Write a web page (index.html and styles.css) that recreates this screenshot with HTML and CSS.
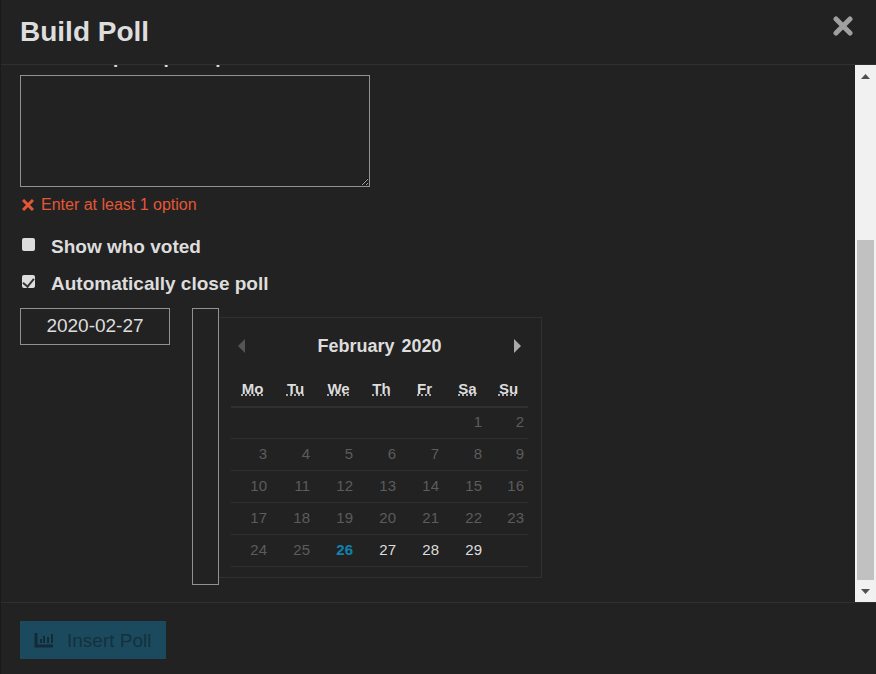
FILE: index.html
```html
<!DOCTYPE html>
<html lang="en">
<head>
    <meta charset="UTF-8">
    <meta name="viewport" content="width=device-width, initial-scale=1.0">
    <title>Build Poll</title>
    <link rel="stylesheet" href="styles.css">
</head>
<body>
    <div class="modal">
        <header class="modal-header">
            <h1>Build Poll</h1>
            <button class="close" aria-label="close">
                <svg width="20" height="20" viewBox="0 0 20 20"><path d="M3 3 L17 17 M17 3 L3 17"/></svg>
            </button>
        </header>
        <div class="modal-middle">
            <form class="modal-body" id="poll-form">
                <label class="options-label" for="options">Enter one poll option per line</label>
                <textarea class="options" id="options"></textarea>
                <p class="tip">
                    <svg width="12" height="12" viewBox="0 0 12 12"><path d="M1 1 L11 11 M11 1 L1 11"/></svg>
                    Enter at least 1 option
                </p>
                <label class="check"><input type="checkbox">Show who voted</label>
                <label class="check"><input type="checkbox" checked>Automatically close poll</label>
                <div class="date-row">
                    <input class="date" type="text" value="2020-02-27" aria-label="Close date">
                    <input class="time" type="text" aria-label="Close time">
                    <div class="calendar">
                        <div class="calendar-title">
                            <button type="button" class="prev" aria-label="Previous month" disabled></button>
                            <div class="month"><span>February</span><span>2020</span></div>
                            <button type="button" class="next" aria-label="Next month"></button>
                        </div>
                        <table>
                            <thead>
                                <tr>
                                    <th><abbr title="Monday">Mo</abbr></th>
                                    <th><abbr title="Tuesday">Tu</abbr></th>
                                    <th><abbr title="Wednesday">We</abbr></th>
                                    <th><abbr title="Thursday">Th</abbr></th>
                                    <th><abbr title="Friday">Fr</abbr></th>
                                    <th><abbr title="Saturday">Sa</abbr></th>
                                    <th><abbr title="Sunday">Su</abbr></th>
                                </tr>
                            </thead>
                            <tbody>
                                <tr><td></td><td></td><td></td><td></td><td></td><td>1</td><td>2</td></tr>
                                <tr><td>3</td><td>4</td><td>5</td><td>6</td><td>7</td><td>8</td><td>9</td></tr>
                                <tr><td>10</td><td>11</td><td>12</td><td>13</td><td>14</td><td>15</td><td>16</td></tr>
                                <tr><td>17</td><td>18</td><td>19</td><td>20</td><td>21</td><td>22</td><td>23</td></tr>
                                <tr>
                                    <td>24</td>
                                    <td>25</td>
                                    <td class="today">26</td>
                                    <td><button type="button" class="day">27</button></td>
                                    <td><button type="button" class="day">28</button></td>
                                    <td><button type="button" class="day">29</button></td>
                                    <td></td>
                                </tr>
                            </tbody>
                        </table>
                    </div>
                </div>
            </form>
            <div class="scrollbar">
                <span class="arrow up"></span>
                <div class="track"><div class="thumb"></div></div>
                <span class="arrow down"></span>
            </div>
        </div>
        <footer class="modal-footer">
            <button class="insert" form="poll-form" disabled>
                <svg width="20" height="16" viewBox="0 0 20 16"><path d="M2 0 V13 H19"/><path class="bars" d="M7 10 V6 M10 10 V3 M14 10 V4 M18 10 V1"/></svg>
                Insert Poll
            </button>
        </footer>
    </div>
</body>
</html>
```
FILE: styles.css
```css
*{
    box-sizing: border-box;
    margin: 0;
    padding: 0;
}
body{
    background-color: #222;
    color: #ddd;
    font-family: "Liberation Sans", Arial, sans-serif;
    font-size: 19px;
}
button, input, textarea{
    font: inherit;
    color: inherit;
    background: none;
    border: none;
    border-radius: 0;
}
.modal{
    height: 100vh;
    display: flex;
    flex-direction: column;
    border-left: 1px solid #1a1a1a;
}

/* header */
.modal-header{
    height: 65px;
    flex-shrink: 0;
    display: flex;
    justify-content: space-between;
    padding: 16px 23px 0 19px;
    border-bottom: 1px solid #303030;
}
.modal-header h1{
    font-size: 28px;
    line-height: 32px;
}
.close{
    width: 20px;
    height: 20px;
}
.close svg{
    display: block;
    fill: none;
    stroke: #a0a0a0;
    stroke-width: 5;
    stroke-linecap: round;
}

/* body is scrolled to the bottom */
.modal-middle{
    flex: 1;
    min-height: 0;
    display: flex;
}
.modal-body{
    flex: 1;
    overflow: hidden;
    display: flex;
    flex-direction: column;
    justify-content: flex-end;
    align-items: flex-start;
    padding: 0 19px 17px;
}
.modal-body > *{
    flex-shrink: 0;
}
.options-label{
    font-weight: bold;
    line-height: 24px;
    margin-bottom: 6px;
}
.options{
    width: 350px;
    height: 112px;
    border: 1px solid #919191;
}
.tip{
    display: flex;
    align-items: center;
    gap: 7px;
    margin-top: 8px;
    padding-left: 2px;
    font-size: 16px;
    line-height: 20px;
    color: #e45735;
}
.tip svg{
    fill: none;
    stroke: #e45735;
    stroke-width: 3;
}
.check{
    display: flex;
    gap: 16px;
    margin-top: 15px;
    padding-left: 2px;
    font-weight: bold;
    line-height: 22px;
}
.tip + .check{
    margin-top: 21px;
}
.check input{
    appearance: none;
    display: grid;
    justify-items: center;
    width: 13px;
    height: 13px;
    margin-top: 2px;
    border-radius: 2px;
    background-color: #ddd;
}
.check input:checked::after{
    content: "";
    width: 5px;
    height: 9px;
    margin-top: 1px;
    border: solid #333;
    border-width: 0 2px 2px 0;
    transform: rotate(40deg);
}

/* date picker */
.date-row{
    display: flex;
    margin-top: 13px;
}
.date{
    width: 150px;
    height: 37px;
    border: 1px solid #919191;
    text-align: center;
}
.time{
    width: 27px;
    margin-left: 22px;
    border: 1px solid #919191;
}
.calendar{
    width: 323px;
    margin: 9px 0 7px;
    padding: 12px 13px 10px 12px;
    border: 1px solid #303030;
    border-left: none;
}
.calendar-title{
    display: flex;
    justify-content: space-between;
    align-items: center;
    height: 33px;
    padding: 0 7px;
}
.month{
    display: flex;
    gap: 7px;
    font-size: 18px;
    font-weight: bold;
}
.prev, .next{
    width: 7px;
    height: 14px;
    background-color: #aaa;
    clip-path: polygon(0 0, 100% 50%, 0 100%);
}
.prev{
    background-color: #555;
    clip-path: polygon(100% 0, 0 50%, 100% 100%);
}
.calendar table{
    width: 100%;
    table-layout: fixed;
    border-collapse: collapse;
    font-size: 15px;
}
.calendar th{
    width: 43px;
    height: 44px;
    padding-top: 8px;
}
.calendar th:last-child{
    width: auto;
}
.calendar thead{
    border-bottom: 2px solid #303030;
}
.calendar abbr{
    text-decoration: underline dotted;
}
.calendar td{
    height: 32px;
    padding: 0 7px 2px 0;
    border-bottom: 1px solid #303030;
    text-align: right;
    color: #5c5c5c;
}
.calendar td:last-child{
    padding-right: 4px;
}
.calendar .today{
    color: #0f82af;
    font-weight: bold;
}
.day{
    color: #ddd;
}

/* scrollbar */
.scrollbar{
    width: 21px;
    display: flex;
    flex-direction: column;
    align-items: center;
    background-color: #f1f1f1;
}
.track{
    flex: 1;
    width: 17px;
    display: flex;
    align-items: flex-end;
}
.thumb{
    width: 100%;
    height: 69%;
    background-color: #c1c1c1;
}
.arrow{
    width: 9px;
    height: 5px;
    margin: 9px 0 8px;
    background-color: #505050;
}
.up{
    clip-path: polygon(50% 0, 100% 100%, 0 100%);
}
.down{
    clip-path: polygon(0 0, 100% 0, 50% 100%);
}

/* footer */
.modal-footer{
    flex-shrink: 0;
    padding: 18px 19px 15px;
    border-top: 1px solid #303030;
}
.insert{
    display: flex;
    align-items: center;
    gap: 13px;
    height: 38px;
    padding: 1px 15px 0 14px;
    background-color: #1b4a5f;
    color: #15303d;
}
.insert svg{
    fill: none;
    stroke: #132b37;
    stroke-width: 3;
}
.insert .bars{
    stroke-width: 2;
}
```
